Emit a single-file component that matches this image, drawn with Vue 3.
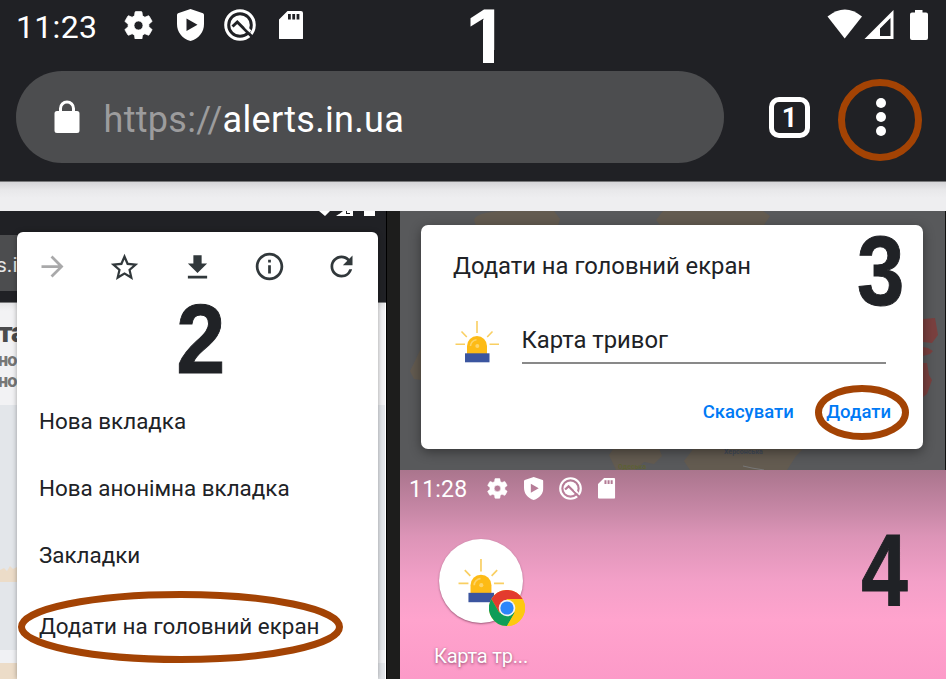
<script setup>
const statusIcons = ['gear', 'shield', 'search', 'sd']
const menuIcons = ['forward', 'star', 'download', 'info', 'reload']
const menuItems = ['Нова вкладка', 'Нова анонімна вкладка', 'Закладки', 'Додати на головний екран']
const marks = [
  { n: '2', x: 176.3, y: 373, size: 99, sx: 0.89, color: '#202226' },
  { n: '3', x: 857, y: 305, size: 99, sx: 0.86, color: '#202226' },
  { n: '4', x: 861.2, y: 605, size: 102, sx: 0.82, color: '#202226' },
]
const rings = [
  { cx: 880, cy: 120, rx: 38.5, ry: 37.5 },
  { cx: 180.5, cy: 627, rx: 159, ry: 32.5 },
  { cx: 862, cy: 412.5, rx: 43.5, ry: 24 },
]
</script>

<template>
  <div class="page">
    <svg class="defs" width="0" height="0">
      <defs>
        <symbol id="gear" viewBox="2 2 20 20">
          <path d="M19.14 12.94c.04-.3.06-.61.06-.94 0-.32-.02-.64-.07-.94l2.03-1.58c.18-.14.23-.41.12-.61l-1.92-3.32c-.12-.22-.37-.29-.59-.22l-2.39.96c-.5-.38-1.03-.7-1.62-.94l-.36-2.54c-.04-.24-.24-.41-.48-.41h-3.84c-.24 0-.43.17-.47.41l-.36 2.54c-.59.24-1.13.57-1.62.94l-2.39-.96c-.22-.08-.47 0-.59.22L2.74 8.87c-.12.21-.08.47.12.61l2.03 1.58c-.05.3-.09.63-.09.94s.02.64.07.94l-2.03 1.58c-.18.14-.23.41-.12.61l1.92 3.32c.12.22.37.29.59.22l2.39-.96c.5.38 1.03.7 1.62.94l.36 2.54c.05.24.24.41.48.41h3.84c.24 0 .44-.17.47-.41l.36-2.54c.59-.24 1.13-.56 1.62-.94l2.39.96c.22.08.47 0 .59-.22l1.92-3.32c.12-.22.07-.47-.12-.61zM12 15.1a3.1 3.1 0 1 1 0-6.2 3.1 3.1 0 0 1 0 6.200z" stroke="currentColor" stroke-width=".5" />
        </symbol>
        <symbol id="shield" viewBox="0 0 27 32">
          <path fill-rule="evenodd" d="M13.500 0 26 4.200Q27 4.600 27 6v9c0 8-5 14.500-13.500 17C5 29.500 0 23 0 15V6Q0 4.600 1 4.200ZM9.500 9.500v12.500l11-6.200Z" />
        </symbol>
        <symbol id="search" viewBox="0 0 32 32">
          <circle cx="16" cy="16" r="14.300" fill="none" stroke="currentColor" stroke-width="3" />
          <circle cx="16" cy="16" r="9.800" />
          <path d="m8.500 17.500 4.800-4.500 16 16" fill="none" stroke="var(--cut)" stroke-width="3" />
          <path d="m21.500 17.500 5 5" stroke="currentColor" stroke-width="2.600" />
        </symbol>
        <symbol id="sd" viewBox="0 0 24 29">
          <path fill-rule="evenodd" d="M8.500 0H22q2 0 2 2v25q0 2-2 2H2q-2 0-2-2V8.500ZM9 3v5.500h2.800v-5.500ZM13.300 3v5.500h2.800v-5.500ZM17.600 3v5.500h2.800v-5.500Z" />
        </symbol>
        <symbol id="forward" viewBox="0 0 24 24">
          <path d="m12 4-1.410 1.410L16.170 11H4v2h12.170l-5.580 5.590L12 20l8-8z" fill="#a9a9aa" />
        </symbol>
        <symbol id="star" viewBox="0 0 24 24">
          <path d="m22 9.240-7.190-.62L12 2 9.190 8.630 2 9.240l5.460 4.730L5.820 21 12 17.270 18.180 21l-1.630-7.030L22 9.240zM12 15.400l-3.760 2.270 1-4.280-3.320-2.880 4.380-.38L12 6.100l1.710 4.040 4.380.38-3.320 2.880 1 4.280L12 15.400z" />
        </symbol>
        <symbol id="download" viewBox="0 0 24 24">
          <path d="M19 9h-4V3H9v6H5l7 7 7-7zM5 18v2h14v-2H5z" />
        </symbol>
        <symbol id="info" viewBox="0 0 24 24">
          <path d="M11 7h2v2h-2zm0 4h2v6h-2zm1-9C6.480 2 2 6.480 2 12s4.480 10 10 10 10-4.480 10-10S17.520 2 12 2zm0 18c-4.410 0-8-3.590-8-8s3.590-8 8-8 8 3.590 8 8-3.590 8-8 8z" />
        </symbol>
        <symbol id="reload" viewBox="0 0 24 24">
          <path d="M17.650 6.350A7.958 7.958 0 0 0 12 4c-4.420 0-7.990 3.580-7.990 8s3.570 8 7.990 8c3.730 0 6.840-2.550 7.730-6h-2.080A5.990 5.990 0 0 1 12 18c-3.310 0-6-2.690-6-6s2.690-6 6-6c1.660 0 3.140.69 4.220 1.780L13 11h7V4l-2.350 2.350z" />
        </symbol>
        <symbol id="siren" viewBox="455 320 45 43">
          <path d="M477 321v12M461.500 331.500l5.300 5.500M492.500 331.500l-5.300 5.500M455.500 344.300h9.500M489.500 344.300h9.500" stroke="#f9cf62" stroke-width="1.600" />
          <path d="M467 354v-8a10 10 0 0 1 20 0v8Z" fill="#fdbb16" />
          <path d="M470.500 346a6.500 6.500 0 0 1 6-6.300" fill="none" stroke="#fdd469" stroke-width="1.600" />
          <circle cx="477.300" cy="346" r="2" fill="#fdd469" />
          <path d="M465 353.300h24.500v9H465z" fill="#3b559f" />
        </symbol>
      </defs>
    </svg>

    <header class="top">
      <div class="statusline">
        <div class="status">
          <span class="time">11:23</span>
          <svg v-for="i in statusIcons" :key="i" :class="'s-' + i"><use :href="'#' + i" /></svg>
        </div>
        <svg class="signals" viewBox="827 9 102 32">
          <path d="M827.500 16.500Q845 2.500 862 16.500L844.700 38.500Z" />
          <path fill-rule="evenodd" d="M893.500 10v29H864.500ZM890.500 18 880 28.500v7.500h10.500Z" />
          <path d="M915 10h7.500v2.500h3.500q2 0 2 2V38q0 2-2 2h-14q-2 0-2-2V14.500q0-2 2-2h3Z" />
        </svg>
      </div>
      <div class="toolbar">
        <div class="omnibox">
          <svg class="lock" viewBox="0 0 26 33"><path fill-rule="evenodd" d="M5 11V8.500a8 8 0 0 1 16 0V11h2q2.500 0 2.500 2.500v17q0 2.500-2.500 2.500H3Q.5 33 .5 30.500v-17Q.5 11 3 11ZM8 11h10V8.500a5 5 0 0 0-10 0Z" /></svg>
          <span class="url"><span class="scheme">https://</span>alerts.in.ua</span>
        </div>
        <span class="tabs">1</span>
        <span class="dots"><i></i><i></i><i></i></span>
      </div>
    </header>
    <div class="strip"></div>

    <main class="panels">
      <section class="left">
        <div class="behind">
          <div class="dark">
            <svg class="cutsignals" viewBox="316 211 62 6">
              <path d="M319 211h11l-5 5ZM338 215l5-4h3v4ZM347 211h6v5h-17l3-2h11v-1h-3ZM364 211h11v5h-11Z" />
            </svg>
            <div class="pill">s.in</div>
          </div>
          <div class="site">
            <b>та</b><small>но</small><small>нов</small>
          </div>
          <svg class="region" viewBox="0 0 386 274">
            <path d="M0 165 4 163l3 3 3-5 3 3 4-2v15H0Z" fill="#ecdcc8" />
            <path d="M0 245h386v13H0Z" fill="#f0f1f4" />
            <path d="M0 258h17v16H0Z" fill="#ecdcc8" />
            <path d="M385 0h1v274h-1Z" fill="#fff" />
          </svg>
        </div>
        <div class="menu">
          <div class="menuicons">
            <svg v-for="i in menuIcons" :key="i" :class="'m-' + i"><use :href="'#' + i" /></svg>
          </div>
          <ul>
            <li v-for="m in menuItems" :key="m">{{ m }}</li>
          </ul>
        </div>
        <div class="bezel"></div>
      </section>

      <section class="right">
        <div class="modal">
          <svg class="map" viewBox="400 211 546 259">
            <path d="M474 220q2-8 30-9h50l6 8-3 10h-80ZM656 220l7-9h100l7 5-6 9H660Z" fill="#635b50" />
            <path d="M421 348v32l-7-1-4-8 6-12Z" fill="#635b50" />
            <path d="M609 455l5-7h45l3 8-8 8-10-2-9 8h-19ZM684 461l10-13h110l-8 8-9 14H690Z" fill="#635b50" />
            <path d="m923 319 12-1 2 11 1 6-6 8-9-1ZM923 347l5 1 5 3-3 3-7 2ZM923 363h4l2 12 3 5-5 14-4 3Z" fill="#7a403f" />
            <path d="M743 466l9 2 12 2" stroke="#777" fill="none" />
            <text x="618" y="469" class="green">Одеська</text>
            <text x="724" y="454" class="blue">Херсонська</text>
          </svg>
          <div class="dialog">
            <h2>Додати на головний екран</h2>
            <div class="field">
              <svg class="siren"><use href="#siren" /></svg>
              <div class="input">Карта тривог</div>
            </div>
            <div class="actions"><span class="cancel">Скасувати</span><span class="add">Додати</span></div>
          </div>
        </div>
        <div class="home">
          <div class="status small">
            <span class="time">11:28</span>
            <svg v-for="i in statusIcons" :key="i" :class="'s-' + i"><use :href="'#' + i" /></svg>
          </div>
          <div class="app">
            <div class="disc">
              <svg class="appsiren"><use href="#siren" /></svg>
              <svg class="chrome" viewBox="-18 -18 36 36">
                <circle r="18" fill="#fdc90f" />
                <path d="M-15.600-9A18 18 0 0 1 15.600-9H0L-7.800 4.500Z" fill="#e33b2e" />
                <path d="M-15.600-9A18 18 0 0 0 0 18L7.800 4.500H-7.800Z" fill="#0f9d58" />
                <path d="M0-9H15.600A18 18 0 0 1 0 18L7.800 4.500Z" fill="#fdc90f" />
                <circle r="8.300" fill="#f3f3f3" />
                <circle r="6.600" fill="#2b86fb" />
              </svg>
            </div>
            <div class="applabel">Карта тр...</div>
          </div>
        </div>
      </section>
    </main>

    <svg class="notes" viewBox="0 0 946 679">
      <text class="mark" x="465.300" y="63" font-size="78" fill="#fff">1</text>
      <path d="M465 50h19v14H465ZM494 50h17v14h-17Z" fill="#202125" />
      <path d="M483 20h11v43h-11Z" fill="#fff" />
      <text
        v-for="m in marks" :key="m.n" class="mark" :font-size="m.size" :fill="m.color" :stroke="m.color"
        :transform="`translate(${m.x} ${m.y}) scale(${m.sx} 1)`"
      >{{ m.n }}</text>
      <ellipse v-for="r in rings" :key="r.cx" v-bind="r" fill="none" stroke="#a34304" stroke-width="7" />
    </svg>
  </div>
</template>

<style>
body { margin: 0; overflow: hidden; }
</style>

<style scoped>
* { box-sizing: border-box; }
.page { position: relative; width: 946px; height: 679px; overflow: hidden; font-family: Roboto, "Liberation Sans", sans-serif; color: #202226; display: flex; flex-direction: column; }
.defs { position: absolute; }
svg { fill: currentColor; flex: none; display: block; }
.notes { position: absolute; z-index: 2; inset: 0; width: 946px; height: 679px; pointer-events: none; }
.mark { font-family: "Liberation Sans", sans-serif; font-weight: 700; stroke-width: 1; }

.top { height: 182px; background: #202125; color: #fff; border-bottom: 1px solid #77787a; flex: none; }
.statusline { display: flex; justify-content: space-between; padding: 9px 17.500px 0 16px; height: 71px; }
.status { --cut: #202125; display: flex; align-items: center; height: 32px; font-size: 32px; }
.time { line-height: 1em; position: relative; top: .05em; letter-spacing: .01em; }
.s-gear { width: .906em; height: .906em; margin-left: .84em; }
.s-shield { width: .844em; height: 1em; margin-left: .73em; }
.s-search { width: 1em; height: 1em; margin-left: .65em; }
.s-sd { width: .75em; height: .906em; margin-left: .72em; }
.signals { width: 102px; height: 32px; }
.toolbar { display: flex; align-items: center; height: 92px; padding-left: 16px; }
.omnibox { width: 708px; height: 92px; border-radius: 46px; background: #4c4d4f; display: flex; align-items: center; padding-left: 37.500px; }
.lock { width: 26px; height: 33px; margin-bottom: 1px; }
.url { margin-left: 24px; font-size: 36px; letter-spacing: .3px; line-height: 44px; padding-top: 5px; }
.scheme { color: #9c9c9d; }
.tabs { margin-left: 45px; width: 41px; height: 41px; border: 5px solid #fff; border-radius: 10px; font-size: 27px; font-weight: 700; line-height: 33px; text-align: center; }
.dots { margin-left: 66px; display: flex; flex-direction: column; gap: 4px; }
.dots i { width: 10px; height: 10px; border-radius: 50%; background: #fff; }
.strip { height: 29px; flex: none; background: linear-gradient(#d5d5d8, #e8e8ea 8px, #eeeef0 16px); }

.panels { display: flex; height: 468px; }
.left { width: 400px; display: grid; grid-template-columns: 386px 14px; grid-template-rows: 468px; overflow: hidden; }
.behind { grid-area: 1 / 1; background: #e3e6ea; display: flex; flex-direction: column; overflow: hidden; }
.dark { height: 92px; background: #202125; flex: none; display: flex; flex-direction: column; border-bottom: 1px solid #77787a; }
.cutsignals { width: 62px; height: 6px; margin-left: 316px; color: #fff; }
.pill { margin-top: 18px; width: 17px; height: 56px; background: #4c4d4f; color: #e5e5e5; font-size: 21px; line-height: 61px; text-indent: -4px; }
.site { height: 102px; flex: none; background: linear-gradient(#e4e4e6, #f2f2f4 8px); color: #777; display: flex; flex-direction: column; padding-top: 14px; border-right: 1px solid #fff; }
.site b { font-size: 28px; line-height: 32px; font-weight: 900; color: #4b4b4d; margin-left: -2px; letter-spacing: -1.500px; }
.site small { font-size: 18px; line-height: 21px; font-weight: 800; margin-left: -2px; letter-spacing: -1px; }
.region { width: 386px; height: 274px; }
.menu { grid-area: 1 / 1; margin: 21px 8px 0 17px; background: #fff; border-radius: 6px 6px 0 0; box-shadow: 0 0 5px rgba(0, 0, 0, .35); }
.menuicons { display: flex; justify-content: space-between; padding: 18px 20px 0 19px; color: #31383b; height: 156px; }
.menuicons svg { width: 33px; height: 33px; }
.m-star, .m-download { margin-top: 1px; }
ul { list-style: none; margin: 0; padding: 0 0 0 22px; }
li { height: 67px; line-height: 67px; font-size: 22.400px; white-space: nowrap; }
li:last-child { padding-top: 4px; }
.bezel { grid-area: 1 / 2; background: #1d1d1c; border-left: 1px solid #000; }

.right { width: 546px; }
.modal { height: 259px; background: #58595b; display: grid; border-right: 1px solid #111; overflow: hidden; }
.map { grid-area: 1 / 1; width: 546px; height: 259px; }
.green { font-size: 7px; fill: #5d6036; font-weight: 700; }
.blue { font-size: 7px; fill: #434c5a; font-weight: 700; }
.dialog { grid-area: 1 / 1; z-index: 1; margin: 14px 0 0 21px; width: 502px; height: 224px; background: #fff; border-radius: 7px; padding: 25px 32px 0 32px; box-shadow: 0 3px 12px rgba(0, 0, 0, .4); }
h2 { margin: 0; font-size: 23.800px; line-height: 32px; font-weight: 400; white-space: nowrap; }
.field { display: flex; margin-top: 36px; padding: 0 5px 0 2px; }
.siren { width: 45px; height: 43px; margin-top: 2px; }
.input { flex: 1; margin-left: 21.500px; height: 45.500px; font-size: 23.800px; line-height: 44px; border-bottom: 2px solid #898989; }
.actions { display: flex; justify-content: flex-end; gap: 32.500px; margin-top: 36.500px; font-size: 18.500px; line-height: 24px; font-weight: 500; color: #007af5; }
.home { height: 209px; background: linear-gradient(#aa758d, #c888a7 42px, #dc94b7 66px, #f3a0c8 112px, #ffa3cd 150px, #fc9ac8 209px); color: #fff; padding: 7px 0 0 9px; }
.small { --cut: #b77b97; height: 23px; font-size: 23px; }
.app { width: 144px; display: flex; flex-direction: column; align-items: center; padding-top: 39px; }
.disc { position: relative; width: 84px; height: 84px; border-radius: 50%; background: #fff; box-shadow: 0 1px 2px rgba(60, 20, 40, .5); padding: 19px 0 0 19px; }
.appsiren { width: 47px; height: 45px; }
.chrome { position: absolute; left: 50px; top: 51px; width: 36px; height: 36px; }
.applabel { margin-top: 19.500px; font-size: 20px; line-height: 26px; letter-spacing: -.2px; text-shadow: 0 1px 3px rgba(80, 20, 50, .65); }
</style>
